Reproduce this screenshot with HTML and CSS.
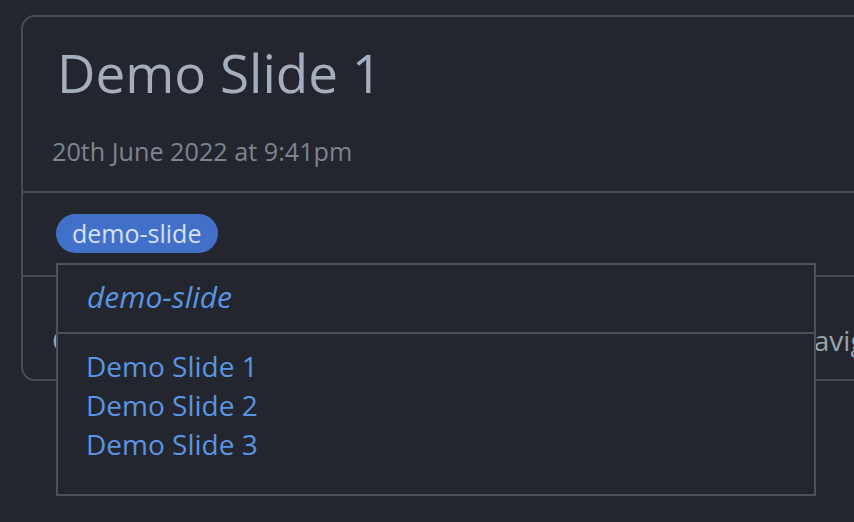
FILE: index.html
```html
<!DOCTYPE html>
<html lang="en">
<head>
<meta charset="utf-8">
<title>Demo Slide 1</title>
<link rel="stylesheet" href="styles.css">
</head>
<body>
<article class="card">
  <header class="card-head">
    <h1 class="title">Demo Slide 1</h1>
    <p class="date">20th June 2022 at 9:41pm</p>
  </header>
  <div class="tags">
    <span class="tag-wrap">
      <a class="tag" href="#">demo-slide</a>
      <div class="popover">
        <div class="pop-head">demo-slide</div>
        <ul class="pop-list">
          <li><a href="#">Demo Slide 1</a></li>
          <li><a href="#">Demo Slide 2</a></li>
          <li><a href="#">Demo Slide 3</a></li>
        </ul>
      </div>
    </span>
  </div>
  <div class="card-body">
    <p>Click on the tag above to list all of the relevant slides and navigate between them.</p>
  </div>
</article>
</body>
</html>
```
FILE: styles.css
```css
html, body {
  margin: 0;
  padding: 0;
  background: #23262e;
  overflow: hidden;
  height: 100%;
}
body {
  font-family: "Open Sans", "Noto Sans", sans-serif;
  color: #9aa3af;
}
.card {
  width: 900px;
  margin: 15px 0 0 21px;
  border: 2px solid #464b54;
  border-radius: 14px;
  background: #23262e;
}
.card-head {
  padding: 25px 29px 22px;
  border-bottom: 2px solid #464b54;
}
.title {
  margin: 0 0 0 5px;
  font-size: 53px;
  line-height: 62px;
  font-weight: 400;
  color: #a4aebd;
}
.date {
  margin: 29px 0 0;
  font-size: 25.2px;
  line-height: 36px;
  color: #7d8490;
}
.tags {
  padding: 21px 33px 22px;
  border-bottom: 2px solid #464b54;
  display: flex;
}
.tag-wrap {
  position: relative;
  display: inline-flex;
}
.tag {
  display: inline-block;
  padding: 1px 17px 1px 16px;
  font-size: 25px;
  line-height: 37px;
  background: #4270c9;
  color: #d5e0f5;
  border-radius: 20px;
  text-decoration: none;
}
.popover {
  position: absolute;
  left: 0;
  top: 49px;
  width: 760px;
  box-sizing: border-box;
  border: 2px solid #4c515a;
  background: #23262e;
  z-index: 5;
}
.pop-head {
  padding: 12px 29px 16px;
  font-size: 30px;
  line-height: 39px;
  font-style: italic;
  color: #5b94e2;
  border-bottom: 2px solid #4c515a;
}
.pop-list {
  list-style: none;
  margin: 0;
  padding: 13px 28px 30px;
}
.pop-list li {
  font-size: 28px;
  line-height: 39px;
}
.pop-list a {
  color: #5b94e2;
  text-decoration: none;
}
.card-body {
  padding: 42px 29px 18px;
}
.card-body p {
  margin: 0;
  font-size: 28px;
  line-height: 42px;
  white-space: nowrap;
  color: #9aa3af;
}
```
